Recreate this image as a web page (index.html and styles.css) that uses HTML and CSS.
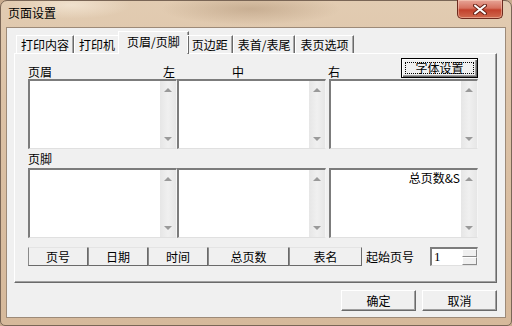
FILE: index.html
```html
<!DOCTYPE html>
<html lang="zh-CN">
<head>
    <meta charset="UTF-8">
    <title>页面设置</title>
    <link rel="stylesheet" href="styles.css">
</head>
<body>

    <div class="window">
        <!-- Title bar -->
        <div class="titlebar">
            <span class="title">页面设置</span>
            <div class="close-btn">
                <svg width="14" height="11" viewBox="0 0 14 11">
                    <path d="M2 1.5 L12 9.5 M12 1.5 L2 9.5" stroke="#6a2418" stroke-width="4" stroke-linecap="round"/>
                    <path d="M2 1.5 L12 9.5 M12 1.5 L2 9.5" stroke="#fff" stroke-width="2" stroke-linecap="round"/>
                </svg>
            </div>
        </div>

        <div class="client">
            <!-- Tabs -->
            <div class="tabs">
                <div class="tab">打印内容</div>
                <div class="tab">打印机</div>
                <div class="tab active">页眉/页脚</div>
                <div class="tab">页边距</div>
                <div class="tab">表首/表尾</div>
                <div class="tab">表页选项</div>
            </div>

            <div class="panel">
                <div class="grid">
                    <div class="label split"><span>页眉</span><span class="left-tag">左</span></div>
                    <div class="label mid">中</div>
                    <div class="label right"><span class="right-tag">右</span><div class="font-btn"><span>字体设置</span></div></div>

                    <div class="box"><div class="text"></div><div class="scroll"><i class="up"></i><i class="down"></i></div></div>
                    <div class="box"><div class="text"></div><div class="scroll"><i class="up"></i><i class="down"></i></div></div>
                    <div class="box last"><div class="text"></div><div class="scroll"><i class="up"></i><i class="down"></i></div></div>

                    <div class="label foot">页脚</div>

                    <div class="box"><div class="text"></div><div class="scroll"><i class="up"></i><i class="down"></i></div></div>
                    <div class="box"><div class="text"></div><div class="scroll"><i class="up"></i><i class="down"></i></div></div>
                    <div class="box last"><div class="text">总页数&amp;S</div><div class="scroll"><i class="up"></i><i class="down"></i></div></div>
                </div>

                <!-- Insert buttons -->
                <div class="toolbar">
                    <div class="tool-btn" style="width: 60px;">页号</div>
                    <div class="tool-btn" style="width: 60px;">日期</div>
                    <div class="tool-btn" style="width: 60px;">时间</div>
                    <div class="tool-btn" style="width: 81px;">总页数</div>
                    <div class="tool-btn" style="width: 73px;">表名</div>
                    <span class="start-label">起始页号</span>
                    <div class="spin">
                        <span class="spin-value">1</span>
                        <div class="spin-btns"><i></i><i></i></div>
                    </div>
                </div>
            </div>

            <!-- Dialog buttons -->
            <div class="dialog-btns">
                <div class="btn">确定</div>
                <div class="btn">取消</div>
            </div>
        </div>
    </div>

</body>
</html>
```

FILE: styles.css
```css
/* General */
body {
    margin: 0;
    padding: 0;
    font-family: "Noto Sans CJK SC", "Noto Sans", sans-serif;
    font-size: 12px;
    color: #000;
    background: #c8ab8e;
}

/* Window frame */
.window {
    width: 512px;
    height: 326px;
    box-sizing: border-box;
    padding: 0 5px 7px 5px;
    border: 1px solid #7a6656;
    border-radius: 7px 7px 5px 5px;
    display: flex;
    flex-direction: column;
    background:
        radial-gradient(ellipse 90px 16px at 250px 8px, rgba(170, 140, 110, 0.45), transparent),
        radial-gradient(ellipse 60px 14px at 70px 4px, rgba(250, 240, 225, 0.6), transparent),
        linear-gradient(180deg, #e2ccb2 0%, #dcc2a6 30%, #d6b99b 100%);
}

.titlebar {
    height: 26px;
    display: flex;
    align-items: flex-start;
}

.title {
    padding: 5px 0 0 2px;
    line-height: 14px;
}

.close-btn {
    margin: -1px 3px 0 auto;
    width: 46px;
    height: 19px;
    box-sizing: border-box;
    border: 1px solid #6d2a1e;
    border-top: none;
    border-radius: 0 0 5px 5px;
    background: linear-gradient(180deg, #e7a597 0%, #d6715f 45%, #c2412c 55%, #cf6a4f 100%);
    box-shadow: inset 0 0 0 1px rgba(255, 220, 200, 0.45);
    display: flex;
    align-items: center;
    justify-content: center;
}

/* Client area */
.client {
    height: 291px;
    box-sizing: border-box;
    border: 1px solid #9d8a78;
    background: #f0f0f0;
    padding: 3px 8px 6px 7px;
    display: flex;
    flex-direction: column;
}

/* Tabs */
.tabs {
    position: relative;
    z-index: 1;
    display: flex;
    align-items: flex-start;
    height: 23px;
    margin: 0 0 -1px 2px;
}

.tab {
    margin-top: 4px;
    height: 18px;
    box-sizing: border-box;
    padding: 0 4px;
    line-height: 17px;
    border-top: 1px solid #fff;
    border-left: 1px solid #fff;
    border-right: 1px solid #6a6a6a;
    box-shadow: inset -1px 0 0 #a8a8a8;
    white-space: nowrap;
}

.tab.active {
    margin: 0 -2px;
    height: 23px;
    padding: 1px 8px 0 8px;
    background: #f0f0f0;
}

/* Tab panel */
.panel {
    height: 230px;
    box-sizing: border-box;
    border: 1px solid;
    border-color: #fff #6a6a6a #6a6a6a #fff;
    box-shadow: inset -1px -1px 0 #a0a0a0;
    padding: 4px 0 0 13px;
}

.grid {
    display: grid;
    grid-template-columns: 149px 149px 152px;
    grid-template-rows: 21px 70px 19px 70px;
}

.label {
    display: flex;
    align-items: flex-end;
    line-height: 14px;
}

.label.split {
    justify-content: space-between;
}

.left-tag {
    padding-right: 2px;
}

.label.mid {
    padding-left: 55px;
}

.label.right {
    align-items: flex-start;
    justify-content: space-between;
}

.right-tag {
    padding: 7px 0 0 2px;
}

.label.foot {
    grid-column: 1 / 4;
    align-items: center;
}

.font-btn {
    width: 77px;
    height: 20px;
    box-sizing: border-box;
    border: 1px solid #000;
    box-shadow: inset 1px 1px 0 #fff, inset -1px -1px 0 #6a6a6a, inset -2px -2px 0 #a0a0a0;
    padding: 3px;
    display: flex;
}

.font-btn span {
    flex: 1;
    border: 1px dotted #000;
    text-align: center;
    line-height: 10px;
}

/* Multi-line boxes */
.box {
    display: flex;
    width: 149px;
    box-sizing: border-box;
    border-style: solid;
    border-width: 2px 1px 1px 2px;
    border-color: #7c7c7c #f5f5f5 #e0e0e0 #7c7c7c;
    background: #fff;
}

.box.last {
    margin-left: 3px;
}

.box .text {
    flex: 1;
    text-align: right;
    line-height: 14px;
    padding: 1px 1px 0 0;
}

.scroll {
    width: 16px;
    background: linear-gradient(90deg, #e6e6e6, #f0f0f0 50%, #e6e6e6);
    display: flex;
    flex-direction: column;
    justify-content: space-between;
    align-items: center;
    padding: 7px 0;
}

.scroll i {
    width: 0;
    height: 0;
    border-left: 4px solid transparent;
    border-right: 4px solid transparent;
}

.scroll .up {
    border-bottom: 4px solid #9a9a9a;
}

.scroll .down {
    border-top: 4px solid #9a9a9a;
}

/* Insert toolbar */
.toolbar {
    display: flex;
    align-items: center;
    margin-top: 9px;
    width: 450px;
    height: 19px;
}

.tool-btn {
    height: 19px;
    box-sizing: border-box;
    border: 1px solid;
    border-color: #e4e4e4 #6a6a6a #6a6a6a #8a8a8a;
    text-align: center;
    line-height: 17px;
}

.start-label {
    margin-left: 4px;
    line-height: 14px;
}

.spin {
    margin-left: auto;
    width: 48px;
    height: 19px;
    box-sizing: border-box;
    border-style: solid;
    border-width: 2px 1px 1px 2px;
    border-color: #7c7c7c #f5f5f5 #e0e0e0 #7c7c7c;
    background: #fff;
    display: flex;
}

.spin-value {
    flex: 1;
    padding-left: 2px;
    font-family: "Liberation Serif", serif;
    line-height: 15px;
    font-size: 13px;
}

.spin-btns {
    width: 15px;
    display: flex;
    flex-direction: column;
}

.spin-btns i {
    flex: 1;
    background: #f0f0f0;
    border: 1px solid;
    border-color: #fff #8a8a8a #8a8a8a #fff;
}

/* Dialog buttons */
.dialog-btns {
    display: flex;
    justify-content: flex-end;
    gap: 6px;
    margin-top: 7px;
}

.btn {
    width: 75px;
    height: 21px;
    box-sizing: border-box;
    border: 1px solid;
    border-color: #fff #6a6a6a #6a6a6a #fff;
    box-shadow: inset -1px -1px 0 #a0a0a0;
    text-align: center;
    line-height: 19px;
}
```
